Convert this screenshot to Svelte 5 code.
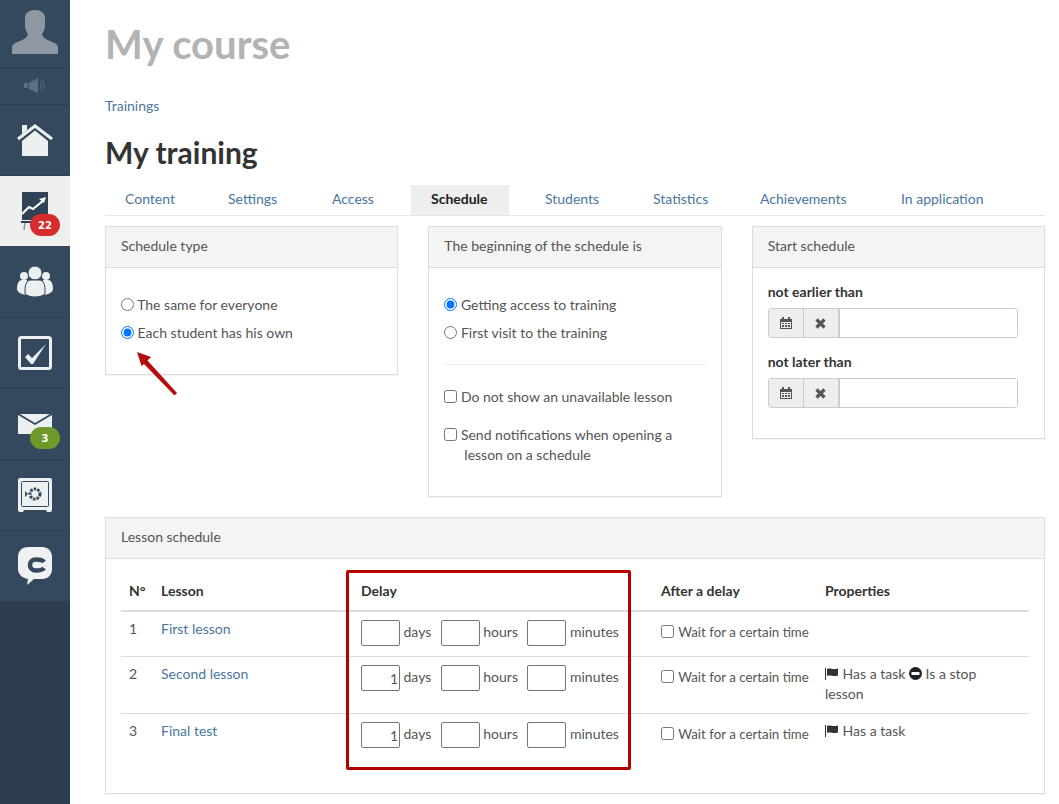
<script>
  const tabs = [
    { label: 'Content', w: 88 },
    { label: 'Settings', w: 89 },
    { label: 'Access', w: 84 },
    { label: 'Schedule', w: 98 },
    { label: 'Students', w: 93 },
    { label: 'Statistics', w: 92 },
    { label: 'Achievements', w: 126 },
    { label: 'In application', w: 120 }
  ];
  const lessons = [
    { n: 1, name: 'First lesson', days: '', task: false, stop: false },
    { n: 2, name: 'Second lesson', days: '1', task: true, stop: true },
    { n: 3, name: 'Final test', days: '1', task: true, stop: false }
  ];
</script>

<div class="page">
  <nav class="side">
    <div class="item avatar">
      <svg width="46" height="44" viewBox="0 0 46 44"><path fill="#8f97a2" d="M0 44V38C0 34 3 33 8 31C12 29 15 28 16 24C13 20 13 17 13 14V8C13 3 17 0 23 0C29 0 33 3 33 8V14C33 17 33 20 30 24C31 28 34 29 38 31C43 33 46 34 46 38V44Z"/></svg>
    </div>
    <div class="item speaker">
      <svg width="22" height="16" viewBox="0 0 22 16"><path fill="#5a7086" d="M0 5h4v5H0zM5 5l9-5v15l-9-4z"/><path fill="none" stroke="#5a7086" d="M16 4c1.500 2 1.500 5 0 7M18 2c2.500 3 2.500 8 0 11"/></svg>
    </div>
    <div class="item">
      <svg width="36" height="34" viewBox="0 0 36 34"><path fill="#ecf0f1" d="M5 2h5v5l-5 4zM5 18 18 7.500 31 18V33H5Z"/><path fill="none" stroke="#ecf0f1" stroke-width="3" d="M1 16 18 3 35 16"/></svg>
    </div>
    <div class="item active">
      <svg width="28" height="39" viewBox="0 0 28 39"><path fill="#2f4256" d="M1 0h26v28H1z"/><path fill="none" stroke="#fff" stroke-width="2.200" d="M1 22l7-7 4 2 11-9"/><path fill="#fff" d="M18 7l7-2-2 6z"/><path fill="#2f4256" d="M0 29h14v2H0z"/><path stroke="#8894a0" stroke-width="1.500" d="M4 31 3 38"/></svg>
      <span class="badge red">22</span>
    </div>
    <div class="item tall">
      <svg width="36" height="31" viewBox="0 0 36 31"><g fill="#ecf0f1"><circle cx="7" cy="10" r="4"/><circle cx="29" cy="10" r="4"/><path d="M0 23c0-6 2-9 5-9h5l-2 15c-4-1-8-3-8-6zM36 23c0-6-2-9-5-9h-5l2 15c4-1 8-3 8-6z"/><circle cx="18" cy="7" r="7" stroke="#34495e"/><path stroke="#34495e" d="M8 24c0-6 2-10 6-10h8c4 0 6 4 6 10v4c-5 4-15 4-20 0z"/></g></svg>
    </div>
    <div class="item">
      <svg width="34" height="34" viewBox="0 0 34 34"><rect x="1.500" y="1.500" width="31" height="31" rx="2" fill="none" stroke="#ecf0f1" stroke-width="3"/><path fill="#ecf0f1" d="M7 21 10 18 14 22 28 8 15 28H13Z"/></svg>
    </div>
    <div class="item">
      <svg width="34" height="20" viewBox="0 0 34 20"><path fill="#ecf0f1" d="M0 1l17 10L34 1v19H0zM2 0h30L17 9z"/></svg>
      <span class="badge green">3</span>
    </div>
    <div class="item">
      <svg width="34" height="34" viewBox="0 0 34 34"><path fill="#ecf0f1" d="M2 0h30a2 2 0 0 1 2 2v30a2 2 0 0 1-2 2h-3l-1-2H6l-1 2H2a2 2 0 0 1-2-2V2a2 2 0 0 1 2-2z"/><rect x="3.500" y="3.500" width="27" height="25" rx="1" fill="none" stroke="#34495e"/><circle cx="17" cy="16" r="5" fill="none" stroke="#34495e" stroke-width="3" stroke-dasharray="2.500 1.100"/><path fill="#34495e" d="M7 13l3 3-3 3z"/></svg>
    </div>
    <div class="item">
      <svg width="34" height="38" viewBox="0 0 34 38"><path fill="#f0f1f2" d="M10 0h14c6 0 10 4 10 10v12c0 6-4 10-10 10H16L9 38l1-6C4 31 0 27 0 22V10C0 4 4 0 10 0z"/><path fill="none" stroke="#34495e" stroke-width="4.500" d="M26 15C24.500 12.800 21.500 12.500 18 12.500C14 12.500 12 14.800 12 18C12 21.200 14 23.500 18 23.500C21.500 23.500 24.500 23.200 26 21"/></svg>
    </div>
    <div class="side-rest"></div>
  </nav>

  <main>
    <h1>My course</h1>
    <a class="crumb" href="#trainings">Trainings</a>
    <h2>My training</h2>

    <div class="tabs">
      {#each tabs as t}
        <a href="#tab" class="tab" class:on={t.label === 'Schedule'} style:width="{t.w}px">{t.label}</a>
      {/each}
    </div>

    <div class="cols">
      <section class="panel first">
        <header>Schedule type</header>
        <div class="body">
          <div class="radios">
            <label><input type="radio" name="type" /> The same for everyone</label>
            <label><input type="radio" name="type" checked /> Each student has his own</label>
          </div>
        </div>
      </section>

      <section class="panel second">
        <header>The beginning of the schedule is</header>
        <div class="body">
          <div class="radios">
            <label><input type="radio" name="begin" checked /> Getting access to training</label>
            <label><input type="radio" name="begin" /> First visit to the training</label>
          </div>
          <hr />
          <label class="check"><input type="checkbox" /> Do not show an unavailable lesson</label>
          <label class="check two"><input type="checkbox" /> Send notifications when opening a<br /><span class="ind">lesson on a schedule</span></label>
        </div>
      </section>

      <section class="panel third">
        <header>Start schedule</header>
        <div class="body">
          {#each ['not earlier than', 'not later than'] as label}
            <div class="field">
              <strong>{label}</strong>
              <div class="group">
                <span class="addon">
                  <svg width="12" height="12" viewBox="0 0 12 12"><path fill="#555" d="M0 2h2V0h2v2h4V0h2v2h2v10H0zM1 5v6h10V5z"/><path fill="#555" d="M2 6h2v1H2zM5 6h2v1H5zM8 6h2v1H8zM2 8h2v2H2zM5 8h2v2H5zM8 8h2v2H8z"/></svg>
                </span>
                <span class="addon">
                  <svg width="11" height="11" viewBox="0 0 11 11"><path stroke="#555" stroke-width="3.200" d="M1.500 1.500l8 8M9.500 1.500l-8 8"/></svg>
                </span>
                <input type="text" />
              </div>
            </div>
          {/each}
        </div>
      </section>
    </div>

    <section class="panel wide">
      <header>Lesson schedule</header>
      <div class="table-wrap">
        <table>
          <colgroup><col class="c1" /><col class="c2" /><col class="c3" /><col class="c4" /><col /></colgroup>
          <thead>
            <tr><th>N°</th><th>Lesson</th><th>Delay</th><th>After a delay</th><th>Properties</th></tr>
          </thead>
          <tbody>
            {#each lessons as l}
              <tr>
                <td>{l.n}</td>
                <td><a href="#lesson">{l.name}</a></td>
                <td>
                  <div class="delay">
                    <input type="text" value={l.days} /><span>days</span>
                    <input type="text" /><span>hours</span>
                    <input type="text" /><span>minutes</span>
                  </div>
                </td>
                <td class="wait"><label><input type="checkbox" /> Wait for a certain time</label></td>
                <td>
                  {#if l.task}
                    <svg class="flag" width="14" height="12" viewBox="0 0 14 12"><path fill="#333" d="M0 0h1v12H0zM2 1c3-1.500 5 1 11-.5v7c-5 1.500-8-1-11 .5z"/></svg> <span>Has a task</span>
                  {/if}
                  {#if l.stop}
                    <svg class="flag" width="13" height="13" viewBox="0 0 13 13"><circle cx="6.500" cy="6.500" r="6.500" fill="#222"/><path fill="#fff" d="M2.500 5h8v3h-8z"/></svg> <span>Is a stop</span><br /><span>lesson</span>
                  {/if}
                </td>
              </tr>
            {/each}
          </tbody>
        </table>
      </div>
    </section>
  </main>

  <div class="red-box"></div>
  <svg class="arrow" width="50" height="50" viewBox="0 0 50 50"><path fill="#b40d0d" d="M1 1 15 6 11.500 9.500 41 42 38.500 44.500 8 13 5.500 15Z"/></svg>
</div>

<style>
  :global(body) { margin: 0; background: #fff; }
  .page {
    position: relative;
    display: flex;
    height: 804px;
    overflow: hidden;
    font-family: "Lato", "Liberation Sans", sans-serif;
    font-size: 14px;
    color: #555;
  }
  .side {
    width: 70px;
    flex: none;
    display: flex;
    flex-direction: column;
    background: #34495e;
  }
  .item {
    position: relative;
    height: 70px;
    flex: none;
    display: flex;
    align-items: center;
    justify-content: center;
    border-bottom: 1px solid #2d3f52;
    box-sizing: content-box;
  }
  .avatar { height: 67px; }
  .avatar svg { margin-bottom: 3px; }
  .speaker { height: 36px; }
  .tall { height: 71px; }
  .active { background: #efefef; border-bottom: 0; }
  .side-rest { flex: 1; background: #2c3e50; }
  .badge {
    position: absolute;
    left: 30px;
    height: 22px;
    width: 30px;
    border-radius: 11px;
    display: flex;
    align-items: center;
    justify-content: center;
    color: #fff;
    font: bold 10px "DejaVu Sans", sans-serif;
  }
  .red { background: #d62c2c; top: 38px; }
  .green { background: #6f9a2a; top: 38px; }

  main { flex: 1; padding: 0 14px 0 35px; min-width: 0; }
  h1 {
    margin: 23px 0 0;
    font-size: 40px;
    line-height: 42px;
    font-weight: 700;
    color: #b3b3b3;
  }
  .crumb {
    display: block;
    margin-top: 32px;
    line-height: 18px;
    color: #4a76a0;
    text-decoration: none;
  }
  a { color: #4a76a0; text-decoration: none; }
  h2 {
    margin: 19px 0 0;
    font-size: 30px;
    line-height: 36px;
    font-weight: 700;
    color: #333;
  }
  .tabs {
    display: flex;
    margin-top: 15px;
    height: 30px;
    border-bottom: 1px solid #e6e6e6;
    box-sizing: content-box;
  }
  .tab {
    padding: 0 0 0 20px;
    margin-right: 15px;
    line-height: 27px;
    height: 30px;
    white-space: nowrap;
    box-sizing: border-box;
    flex: none;
  }
  .tab.on { background: #eee; color: #222; font-weight: 700; margin-right: 16px; }
  .cols {
    display: grid;
    grid-template-columns: repeat(3, 1fr);
    column-gap: 30px;
    align-items: start;
    margin-top: 10px;
  }
  .panel {
    border: 1px solid #ddd;
    box-shadow: 0 1px 1px rgba(0,0,0,.04);
    background: #fff;
  }
  header {
    height: 41px;
    padding: 0 15px;
    line-height: 37px;
    box-sizing: border-box;
    background: #f4f4f4;
    border-bottom: 1px solid #ddd;
    color: #555;
  }
  .body { padding: 15px; }
  .first { height: 149px; box-sizing: border-box; }
  .second { height: 271px; box-sizing: border-box; }
  .third { height: 213px; box-sizing: border-box; }
  .radios { padding-top: 13px; display: flex; flex-direction: column; gap: 10px; }
  .radios label { display: block; line-height: 18px; white-space: nowrap; }
  input[type=radio], input[type=checkbox] { margin: 0; width: 13px; height: 13px; vertical-align: -1px; }
  hr { border: 0; border-top: 1px solid #eee; margin: 22px 0; }
  .check { display: block; line-height: 20px; white-space: nowrap; }
  .check.two { margin-top: 18px; }
  .ind { padding-left: 20px; }
  .field { margin-bottom: 15px; }
  .field strong { display: block; line-height: 18px; color: #333; font-weight: 700; }
  .group {
    display: flex;
    margin-top: 7px;
    width: 250px;
    height: 30px;
    box-sizing: border-box;
    border: 1px solid #ccc;
    border-radius: 3px;
    overflow: hidden;
  }
  .addon {
    width: 35px;
    flex: none;
    display: flex;
    align-items: center;
    justify-content: center;
    background: #eee;
    border-right: 1px solid #ccc;
    box-sizing: border-box;
  }
  .group input { flex: 1; min-width: 0; border: 0; border-left: 1px solid #ccc; outline: none; padding: 0; margin-left: 0; }
  .wide { margin-top: 20px; height: 277px; box-sizing: border-box; }
  .table-wrap { padding: 15px 15px 0; }
  table { width: 908px; border-collapse: collapse; table-layout: fixed; color: #555; }
  .c1 { width: 32px; } .c2 { width: 200px; } .c3 { width: 300px; } .c4 { width: 164px; }
  th {
    text-align: left;
    padding: 7px 8px 9px;
    line-height: 20px;
    height: 36px;
    box-sizing: border-box;
    color: #333;
    font-weight: 700;
    border-bottom: 2px solid #ddd;
  }
  td {
    padding: 7px 8px 9px;
    line-height: 20px;
    vertical-align: top;
    border-top: 1px solid #ddd;
  }
  tbody tr:first-child td { border-top: 0; }
  .delay { display: flex; align-items: center; white-space: nowrap; height: 26px; margin: 1px 0; }
  .delay input {
    width: 39px;
    height: 26px;
    flex: none;
    box-sizing: border-box;
    border: 1px solid #767676;
    border-radius: 2px;
    text-align: right;
    padding: 0 1px;
    margin: 0;
    font: inherit;
    color: #555;
  }
  .delay span { margin: 0 9.500px 2px 3.500px; }
  .wait { white-space: nowrap; padding-top: 10px; font-size: 13.300px; }
  .wait input { margin-right: 1px; }
  .flag { vertical-align: -1px; }
  .red-box {
    position: absolute;
    left: 346px;
    top: 570px;
    width: 285px;
    height: 200px;
    box-sizing: border-box;
    border: 3px solid #b50000;
    border-radius: 2px;
  }
  .arrow { position: absolute; left: 136px; top: 351px; }
</style>
